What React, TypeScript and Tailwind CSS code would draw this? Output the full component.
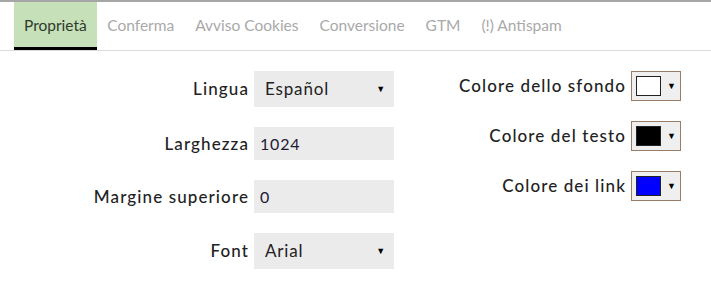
import React from 'react';

const tabs = ['Proprietà', 'Conferma', 'Avviso Cookies', 'Conversione', 'GTM', '(!) Antispam'];

function SelectBox({ value }: { value: string }) {
    return (
        <div className="h-[36px] w-[140px] bg-[#ebebeb] flex items-center justify-between pl-[11px] pr-[8px] text-[17px] tracking-[0.05em] text-[#222]">
            <span>{value}</span>
            <span className="text-[9px] text-black">▼</span>
        </div>
    );
}

function TextBox({ value }: { value: string }) {
    return (
        <div className="h-[33px] w-[140px] bg-[#ebebeb] flex items-center pl-[6px] text-[16px] tracking-[0.05em] text-[#1e1a33]">
            {value}
        </div>
    );
}

function ColorPicker({ color }: { color: string }) {
    return (
        <div className="h-[30px] w-[50px] border border-[#9a7c64] bg-[#efefef] flex items-center pl-[4px] gap-[6px]">
            <div className="h-[20px] w-[25px] border border-[#222]" style={{ backgroundColor: color }} />
            <span className="text-[9px] text-black">▼</span>
        </div>
    );
}

export default function App() {
    const left: [string, React.ReactNode][] = [
        ['Lingua', <SelectBox value="Español" />],
        ['Larghezza', <TextBox value="1024" />],
        ['Margine superiore', <TextBox value="0" />],
        ['Font', <SelectBox value="Arial" />],
    ];
    const right: [string, string][] = [
        ['Colore dello sfondo', '#ffffff'],
        ['Colore del testo', '#000000'],
        ['Colore dei link', '#0000ff'],
    ];

    return (
        <div className="w-[711px] h-[294px] bg-white font-['Lato','Noto_Sans',sans-serif] overflow-hidden">
            {/* barra schede */}
            <div className="border-t-2 border-[#a6a6a6]">
                <div className="flex pl-[14px] border-b border-[#dcdcdc]">
                    {tabs.map((t, i) => (
                        <div
                            key={t}
                            className={
                                i === 0
                                    ? 'h-[48px] px-[10px] flex items-center pt-[3px] border-b-[3px] border-black bg-[#c6e0b9] text-[15.5px] text-[#2f3a2c]'
                                    : 'h-[48px] px-[10.5px] flex items-center pt-[3px] border-b-[3px] border-transparent text-[15.5px] text-[#a9a9a9]'
                            }
                        >
                            {t}
                        </div>
                    ))}
                </div>
            </div>

            <div className="flex pt-[20px]">
                <div className="grid grid-cols-[249px_140px] gap-x-[5px] gap-y-[20px] items-center">
                    {left.map(([label, field]) => (
                        <React.Fragment key={label}>
                            <div className="text-right text-[17px] font-medium tracking-[0.065em] text-[#222]">{label}</div>
                            {field}
                        </React.Fragment>
                    ))}
                </div>
                <div className="ml-[46px] grid grid-cols-[186px_50px] gap-x-[5px] gap-y-[20px] items-center content-start">
                    {right.map(([label, c]) => (
                        <React.Fragment key={label}>
                            <div className="text-right text-[17px] font-medium tracking-[0.065em] text-[#222] whitespace-nowrap">{label}</div>
                            <ColorPicker color={c} />
                        </React.Fragment>
                    ))}
                </div>
            </div>
        </div>
    );
}
